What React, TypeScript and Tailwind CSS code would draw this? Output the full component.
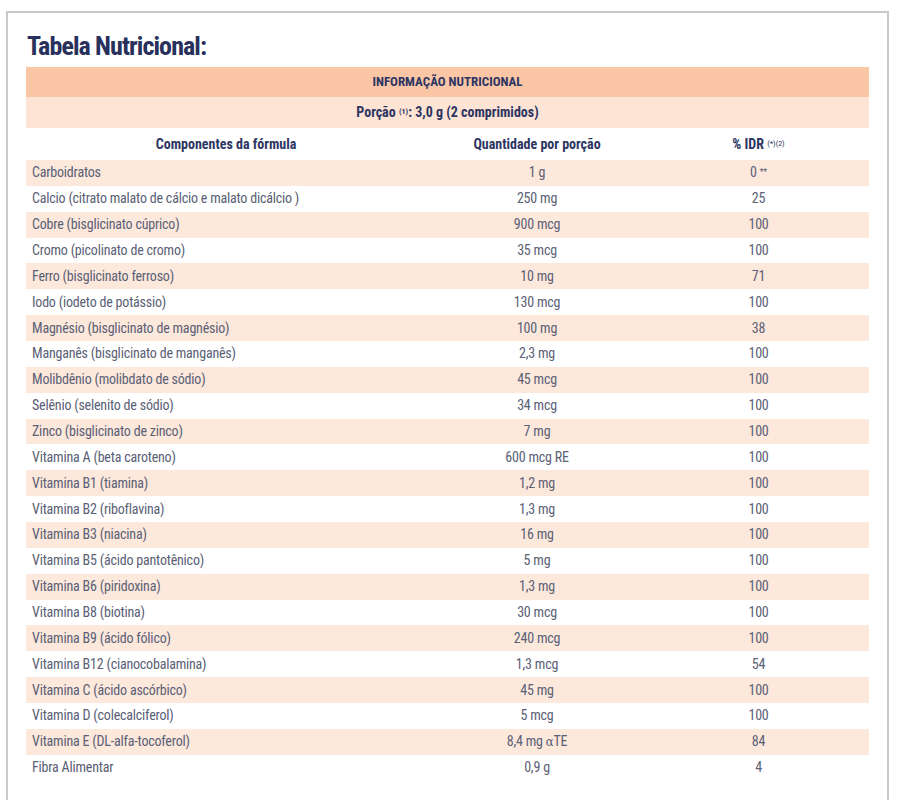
import React from "react";

const rows: [string, React.ReactNode, React.ReactNode][] = [
  ["Carboidratos", "1 g", <span>0 <sup className="text-[9px] relative -top-[2px]">**</sup></span>],
  ["Calcio (citrato malato de cálcio e malato dicálcio )", "250 mg", "25"],
  ["Cobre (bisglicinato cúprico)", "900 mcg", "100"],
  ["Cromo (picolinato de cromo)", "35 mcg", "100"],
  ["Ferro (bisglicinato ferroso)", "10 mg", "71"],
  ["Iodo (iodeto de potássio)", "130 mcg", "100"],
  ["Magnésio (bisglicinato de magnésio)", "100 mg", "38"],
  ["Manganês (bisglicinato de manganês)", "2,3 mg", "100"],
  ["Molibdênio (molibdato de sódio)", "45 mcg", "100"],
  ["Selênio (selenito de sódio)", "34 mcg", "100"],
  ["Zinco (bisglicinato de zinco)", "7 mg", "100"],
  ["Vitamina A (beta caroteno)", "600 mcg RE", "100"],
  ["Vitamina B1 (tiamina)", "1,2 mg", "100"],
  ["Vitamina B2 (riboflavina)", "1,3 mg", "100"],
  ["Vitamina B3 (niacina)", "16 mg", "100"],
  ["Vitamina B5 (ácido pantotênico)", "5 mg", "100"],
  ["Vitamina B6 (piridoxina)", "1,3 mg", "100"],
  ["Vitamina B8 (biotina)", "30 mcg", "100"],
  ["Vitamina B9 (ácido fólico)", "240 mcg", "100"],
  ["Vitamina B12 (cianocobalamina)", "1,3 mcg", "54"],
  ["Vitamina C (ácido ascórbico)", "45 mg", "100"],
  ["Vitamina D (colecalciferol)", "5 mcg", "100"],
  ["Vitamina E (DL-alfa-tocoferol)", <span>8,4 mg <span className="font-['DejaVu_Serif',serif] text-[13px]">α</span>TE</span>, "84"],
  ["Fibra Alimentar", "0,9 g", "4"],
];

export default function App() {
  return (
    <div className="w-[900px] h-[800px] bg-white overflow-hidden font-['Roboto',sans-serif] font-stretch-[75%]">
      <div className="ml-[6px] mt-[11px] w-[883px] h-[800px] border-2 border-b-0 border-[#c9c9c9] px-[18px] pt-[17px]">
        <h1 className="text-[26px] leading-[32px] font-bold text-[#28305c] tracking-[-0.9px] ml-[1px]">
          Tabela Nutricional:
        </h1>
        <div className="mt-[5px] w-[843px]">
          <div className="h-[30px] bg-[#fbc6a6] flex items-center justify-center text-[13px] font-bold text-[#2d3562]">
            INFORMAÇÃO NUTRICIONAL
          </div>
          <div className="h-[31px] bg-[#fde4d5] flex items-center justify-center text-[14px] font-bold text-[#2d3562]">
            <span>
              Porção <sup className="text-[8px] relative -top-[3px]">(1)</sup>: 3,0 g (2 comprimidos)
            </span>
          </div>
          <div className="h-[32px] grid grid-cols-[400px_222px_221px] items-center text-[14px] font-bold text-[#2d3562]">
            <div className="text-center">Componentes da fórmula</div>
            <div className="text-center">Quantidade por porção</div>
            <div className="text-center">
              % IDR <sup className="text-[8px] font-normal relative -top-[3px]">(*)(2)</sup>
            </div>
          </div>
          {rows.map((r, i) => (
            <div
              key={i}
              className={`h-[25.86px] grid grid-cols-[400px_222px_221px] items-center text-[14px] tracking-[-0.2px] text-[#5a6075] ${
                i % 2 === 0 ? "bg-[#fde8dc]" : "bg-white"
              }`}
            >
              <div className="pl-[6px] whitespace-nowrap">{r[0]}</div>
              <div className="text-center whitespace-nowrap">{r[1]}</div>
              <div className="text-center whitespace-nowrap">{r[2]}</div>
            </div>
          ))}
        </div>
      </div>
    </div>
  );
}
